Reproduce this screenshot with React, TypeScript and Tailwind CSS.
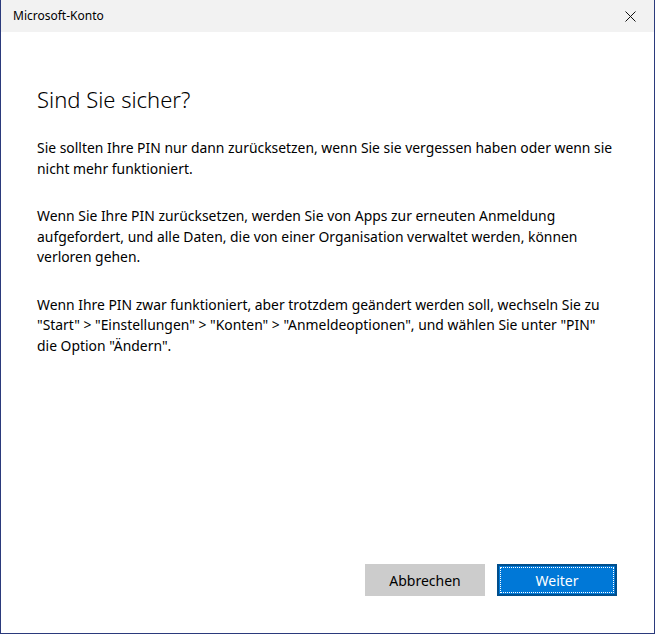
export default function App() {
  const font = { fontFamily: '"Noto Sans", "Open Sans", sans-serif' };

  return (
    <div
      className="w-[655px] h-[634px] bg-white border border-[#2b3a7c] border-t-0 flex flex-col text-[#000]"
      style={font}
    >
      <div className="h-[32px] bg-[#f2f2f2] flex items-center justify-between pl-[12px] pr-[16px] shrink-0">
        <span className="text-[12px] text-[#000]">Microsoft-Konto</span>
        <svg width="11" height="11" viewBox="0 0 11 11" className="mr-[2px]">
          <path d="M0.5 0.5 L10.5 10.5 M10.5 0.5 L0.5 10.5" stroke="#111" strokeWidth="1" />
        </svg>
      </div>

      <div className="flex-1 flex flex-col pl-[36px] pr-[30px]">
        <h1 className="mt-[52px] text-[22px] leading-[30px] font-light text-[#000]">
          Sind Sie sicher?
        </h1>

        <div className="mt-[24px] text-[13.9px] leading-[20.5px] whitespace-nowrap">
          <p>
            Sie sollten Ihre PIN nur dann zurücksetzen, wenn Sie sie vergessen haben oder wenn sie
            <br />
            nicht mehr funktioniert.
          </p>
          <p className="mt-[27px]">
            Wenn Sie Ihre PIN zurücksetzen, werden Sie von Apps zur erneuten Anmeldung
            <br />
            aufgefordert, und alle Daten, die von einer Organisation verwaltet werden, können
            <br />
            verloren gehen.
          </p>
          <p className="mt-[27px]">
            Wenn Ihre PIN zwar funktioniert, aber trotzdem geändert werden soll, wechseln Sie zu
            <br />
            "Start" &gt; "Einstellungen" &gt; "Konten" &gt; "Anmeldeoptionen", und wählen Sie unter "PIN"
            <br />
            die Option "Ändern".
          </p>
        </div>

        <div className="mt-auto mb-[37px] flex justify-end gap-[12px] pr-[7px]">
          <button className="w-[120px] h-[32px] bg-[#cccccc] text-[14px] text-[#000]">
            Abbrechen
          </button>
          <button className="w-[120px] h-[32px] bg-[#0078d7] border-2 border-[#004e8c] text-[14px] text-white p-[1px]">
            <span className="flex w-full h-full items-center justify-center border border-dotted border-white">
              Weiter
            </span>
          </button>
        </div>
      </div>
    </div>
  );
}
